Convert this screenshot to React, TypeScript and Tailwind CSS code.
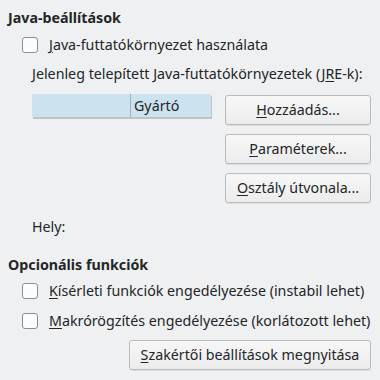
import React from "react";

function CheckBox() {
  return (
    <span className="block h-4 w-4 shrink-0 rounded-[3px] border border-[#8b8e91] bg-[#fcfcfc]" />
  );
}

function Button({
  children,
  className = "",
}: {
  children: React.ReactNode;
  className?: string;
}) {
  return (
    <button
      type="button"
      className={`flex h-[30px] items-center justify-center rounded-[3px] border border-[#b9bbbd] bg-gradient-to-b from-[#f7f7f7] to-[#ececec] text-[14.25px] text-[#232629] shadow-[0_1px_0_rgba(0,0,0,0.08)] ${className}`}
    >
      {children}
    </button>
  );
}

function Row({ label }: { label: React.ReactNode }) {
  return (
    <div className="flex h-4 items-center gap-[11px] pl-[22px]">
      <CheckBox />
      <span className="whitespace-nowrap leading-[18px]">{label}</span>
    </div>
  );
}

export default function App() {
  return (
    <div
      className="h-[380px] w-[380px] overflow-hidden bg-[#eff0f1] text-[14.25px] text-[#232629]"
      style={{ fontFamily: '"Noto Sans", "Open Sans", sans-serif' }}
    >
      <div className="pl-2 pt-[9px] font-bold leading-[18px]">Java-beállítások</div>

      <div className="mt-[10px]">
        <Row
          label={
            <>
              <u className="underline-offset-2">J</u>ava-futtatókörnyezet használata
            </>
          }
        />
      </div>

      <div className="mt-[12px] whitespace-nowrap pl-[32px] leading-[18px]">
        Jelenleg telepített Java-futtatókörnyezetek (J<u className="underline-offset-2">R</u>E-k):
      </div>

      <div className="mt-[11px] flex gap-[14px] pl-[32px]">
        <div className="w-[179px]">
          <div className="flex h-[23px] bg-[#cbe2ef] shadow-[1px_2px_0_#c0c2c4]">
            <div className="w-[99px] border-r border-[#9fb3bf]" />
            <div className="flex items-center pl-[3px] leading-[18px]">Gyártó</div>
          </div>
        </div>
        <div className="mt-[1px] flex w-[146px] flex-col gap-[9px]">
          <Button>
            <u className="underline-offset-2">H</u>ozzáadás...
          </Button>
          <Button>
            <u className="underline-offset-2">P</u>araméterek...
          </Button>
          <Button>
            <u className="underline-offset-2">O</u>sztály útvonala...
          </Button>
        </div>
      </div>

      <div className="mt-[15px] pl-[32px] leading-[18px]">Hely:</div>

      <div className="mt-[20px] pl-2 font-bold leading-[18px]">Opcionális funkciók</div>

      <div className="mt-[9px]">
        <Row
          label={
            <>
              <u className="underline-offset-2">K</u>ísérleti funkciók engedélyezése (instabil lehet)
            </>
          }
        />
      </div>
      <div className="mt-[14px]">
        <Row
          label={
            <>
              <u className="underline-offset-2">M</u>akrórögzítés engedélyezése (korlátozott lehet)
            </>
          }
        />
      </div>

      <div className="mt-[11px] flex justify-end pr-[9px]">
        <Button className="w-[242px]">
          <u className="underline-offset-2">S</u>zakértői beállítások megnyitása
        </Button>
      </div>
    </div>
  );
}
